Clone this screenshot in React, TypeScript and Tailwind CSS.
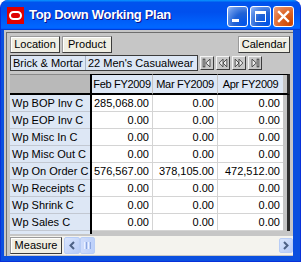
import React from 'react';

const ROWS: [string, string, string, string][] = [
  ['Wp BOP Inv C', '285,068.00', '0.00', '0.00'],
  ['Wp EOP Inv C', '0.00', '0.00', '0.00'],
  ['Wp Misc In C', '0.00', '0.00', '0.00'],
  ['Wp Misc Out C', '0.00', '0.00', '0.00'],
  ['Wp On Order C', '576,567.00', '378,105.00', '472,512.00'],
  ['Wp Receipts C', '0.00', '0.00', '0.00'],
  ['Wp Shrink C', '0.00', '0.00', '0.00'],
  ['Wp Sales C', '0.00', '0.00', '0.00'],
];

const btn =
  'h-[17px] px-[4px] flex items-center bg-[#efeee3] border border-t-[#9a9a9a] border-l-[#9a9a9a] border-b-[#3c3c3c] border-r-[#3c3c3c] shadow-[inset_1px_1px_0_#ffffff] text-black leading-none whitespace-nowrap';

const TitleButton = ({ kind }: { kind: 'min' | 'max' | 'close' }) => {
  const bg =
    kind === 'close'
      ? 'bg-[radial-gradient(circle_at_85%_85%,#cc4600_0%,#dc6527_50%,#f0a080_100%)]'
      : 'bg-[radial-gradient(circle_at_85%_85%,#0054e9_0%,#2263d5_45%,#6696eb_80%,#a0c0f8_100%)]';
  return (
    <div className={`w-[21px] h-[21px] rounded-[3px] border border-white ${bg} relative flex items-center justify-center`}>
      {kind === 'min' && <div className="absolute left-[4px] bottom-[4px] w-[7px] h-[3px] bg-white" />}
      {kind === 'max' && <div className="w-[11px] h-[11px] border border-white border-t-[3px]" />}
      {kind === 'close' && (
        <svg width="13" height="13" viewBox="0 0 13 13">
          <path d="M2 2 L11 11 M11 2 L2 11" stroke="white" strokeWidth="2.4" strokeLinecap="square" />
        </svg>
      )}
    </div>
  );
};

const NavButton = ({ dir }: { dir: 'first' | 'prev' | 'next' | 'last' }) => {
  const paths: Record<string, React.ReactNode> = {
    first: (
      <>
        <rect x="2.5" y="2.5" width="2" height="9" />
        <path d="M10.5 2.5 L5.5 7 L10.5 11.5 Z" />
      </>
    ),
    prev: (
      <>
        <path d="M7 2.5 L2.5 7 L7 11.5 Z" />
        <path d="M11.5 2.5 L7 7 L11.5 11.5 Z" />
      </>
    ),
    next: (
      <>
        <path d="M2.5 2.5 L7 7 L2.5 11.5 Z" />
        <path d="M7 2.5 L11.5 7 L7 11.5 Z" />
      </>
    ),
    last: (
      <>
        <path d="M3.5 2.5 L8.5 7 L3.5 11.5 Z" />
        <rect x="9.5" y="2.5" width="2" height="9" />
      </>
    ),
  };
  return (
    <div className="w-[14px] h-[14px] bg-[#c8c8c8] border border-t-[#f4f4f4] border-l-[#f4f4f4] border-b-[#3c3c3c] border-r-[#3c3c3c] flex items-center justify-center">
      <svg width="14" height="14" viewBox="0 0 14 14" fill="#ececec" stroke="#3a3a3a" strokeWidth="1">
        {paths[dir]}
      </svg>
    </div>
  );
};

const headCell =
  'bg-[#dde7f5] border-t border-black border-b-2 border-b-black flex items-center justify-center whitespace-nowrap tracking-[-0.3px] overflow-hidden';

export default function App() {
  return (
    <div className="w-[301px] h-[262px] overflow-hidden bg-white font-['Liberation_Sans',Arial,sans-serif] text-[11px] text-black">
      <div className="w-full h-full flex flex-col rounded-t-[8px] bg-[#0a4fdf] border border-[#0831d9] border-t-0">
        {/* title bar */}
        <div className="h-[30px] flex items-center rounded-t-[8px] bg-[linear-gradient(180deg,#0997ff_0%,#0053ee_8%,#0050ee_40%,#0066ff_88%,#0066ff_93%,#005bff_95%,#003dd7_96%,#003dd7_100%)] pl-[6px] pr-[6px]">
          <div className="w-[17px] h-[17px] bg-[#e00000] flex items-center justify-center">
            <div className="w-[13px] h-[9px] rounded-[5px] border-[2px] border-white" />
          </div>
          <span className="ml-[5px] text-white font-bold text-[13px] [text-shadow:1px_1px_#0f1089] tracking-[-0.3px]">
            Top Down Working Plan
          </span>
          <div className="ml-auto flex gap-[2px] mt-[2px]">
            <TitleButton kind="min" />
            <TitleButton kind="max" />
            <TitleButton kind="close" />
          </div>
        </div>

        {/* body */}
        <div className="flex-1 ml-[3px] mr-[7px] mb-[5px] bg-[#c6c6c6] pt-[2px] pl-[2px] flex flex-col">
          <div className="flex-1 border-t border-l border-[#6e6e6e] pl-[3px] pt-[3px] pr-[3px] flex flex-col">
            {/* toolbar */}
            <div className="flex gap-[2px]">
              <div className={`${btn} w-[50px] justify-center`}>Location</div>
              <div className={`${btn} w-[50px] justify-center`}>Product</div>
              <div className={`${btn} ml-auto w-[52px] justify-center`}>Calendar</div>
            </div>

            <div className="flex items-center mt-[2px] h-[16px]">
              <div className="flex h-[16px] border border-[#3c3c3c] bg-[#dde7f5] whitespace-nowrap">
                <div className="w-[75px] pl-[2px] flex items-center border-r border-[#a8b4c8]">Brick &amp; Mortar</div>
                <div className="w-[111px] pl-[2px] flex items-center">22 Men's Casualwear</div>
              </div>
              <div className="flex gap-[2px] ml-[2px]">
                <NavButton dir="first" />
                <NavButton dir="prev" />
                <NavButton dir="next" />
                <NavButton dir="last" />
              </div>
            </div>

            {/* grid */}
            <div className="mt-[3px] flex flex-col">
              <div className="flex h-[21px]">
                <div className="w-[80px] bg-[#b9b9b9] border-t border-[#8a8a8a] border-b-2 border-b-black" />
                <div className="w-[2px] bg-black" />
                <div className={`${headCell} w-[61px] border-r border-r-[#c4c4c4]`}>Feb FY2009</div>
                <div className={`${headCell} w-[65px] border-r border-r-[#c4c4c4]`}>Mar FY2009</div>
                <div className={`${headCell} w-[65px]`}>Apr FY2009</div>
                <div className="flex-1 bg-[#c6c6c6] border-t border-black border-b-2 border-b-black border-r-[3px] border-r-[#2e2e2e]" />
              </div>
              {ROWS.map(([label, a, b, c]) => (
                <div key={label} className="flex h-[17px] whitespace-nowrap">
                  <div className="w-[80px] bg-[#dde7f5] border-b border-[#c2c8d2] pl-[2px] flex items-center">{label}</div>
                  <div className="w-[2px] bg-black" />
                  <div className="w-[61px] bg-white border-b border-r border-[#d4d4d4] pr-[3px] flex items-center justify-end">{a}</div>
                  <div className="w-[65px] bg-white border-b border-r border-[#d4d4d4] pr-[3px] flex items-center justify-end">{b}</div>
                  <div className="w-[65px] bg-white border-b border-[#d4d4d4] pr-[3px] flex items-center justify-end">{c}</div>
                  <div className="flex-1 bg-[#c6c6c6] border-r-[3px] border-[#2e2e2e]" />
                </div>
              ))}
              <div className="flex h-[3px]">
                <div className="w-[80px] bg-[#dde7f5]" />
                <div className="w-[2px] bg-black" />
                <div className="flex-1 bg-[#c6c6c6]" />
              </div>
            </div>

            {/* bottom bar */}
            <div className="mt-[2px] flex items-center h-[19px] bg-[#f4f3ee] -mr-[3px]">
              <div className={`${btn} w-[52px] justify-center`}>Measure</div>
              <div className="ml-[2px] w-[16px] h-[17px] rounded-[2px] border border-[#b8cdf6] bg-[linear-gradient(135deg,#d9e5fd,#b7cbf7)] flex items-center justify-center">
                <svg width="8" height="9" viewBox="0 0 8 9">
                  <path d="M6 1 L2.5 4.5 L6 8" stroke="#4d6185" strokeWidth="2" fill="none" />
                </svg>
              </div>
              <div className="w-[15px] h-[17px] rounded-[2px] border border-[#b8cdf6] bg-[linear-gradient(90deg,#cfdcfb,#bcd0fa)] flex items-center justify-center gap-[1px]">
                <div className="w-[1px] h-[7px] bg-[#eef3ff]" />
                <div className="w-[1px] h-[7px] bg-[#8ca6e0]" />
                <div className="w-[1px] h-[7px] bg-[#eef3ff]" />
                <div className="w-[1px] h-[7px] bg-[#8ca6e0]" />
              </div>
              <div className="ml-auto w-[14px] h-[15px] rounded-[2px] border border-[#b8cdf6] bg-[linear-gradient(135deg,#d9e5fd,#b7cbf7)] flex items-center justify-center">
                <svg width="8" height="9" viewBox="0 0 8 9">
                  <path d="M2 1 L5.5 4.5 L2 8" stroke="#4d6185" strokeWidth="2" fill="none" />
                </svg>
              </div>
            </div>
          </div>
        </div>
      </div>
    </div>
  );
}
